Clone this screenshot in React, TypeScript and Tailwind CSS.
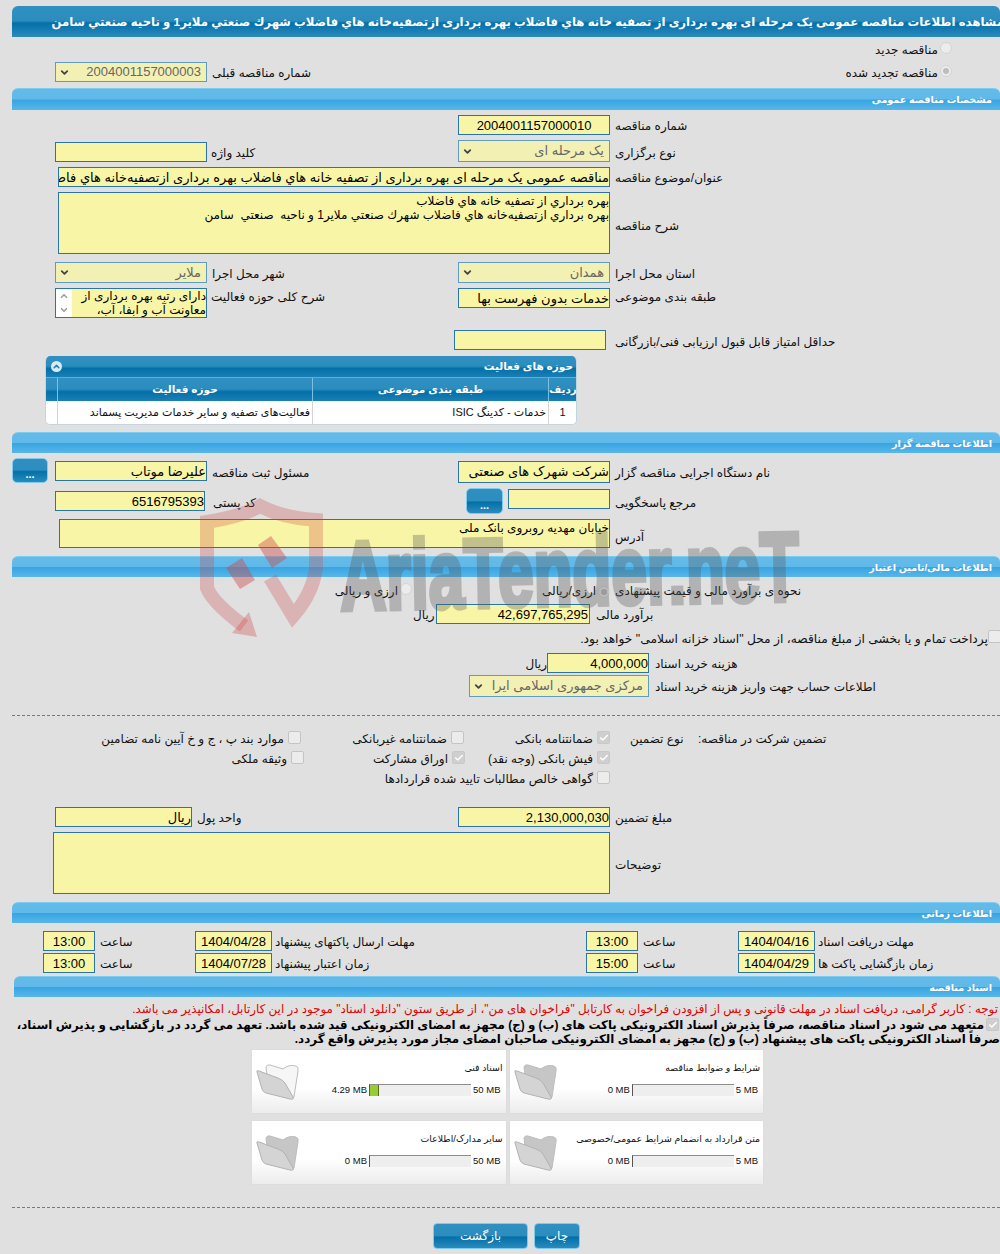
import { Check, ChevronDown, ChevronUp } from 'lucide-react'

const yellow = 'bg-[#f8f6a6] border border-[#2a75a8] text-black'

function Bar({ title, className }: { title: string; className: string }) {
  return (
    <div className={`h-[22px] rounded-t-[6px] border-t border-[#7fcbf0] bg-[linear-gradient(#63bbe9_0%,#61b9e9_48%,#38a5e2_52%,#58b6e8_100%)] text-white font-bold text-[9.6px] leading-[22px] pr-[8px] text-right ${className}`} dir="rtl">
      {title}
    </div>
  )
}

function Label({ children, className = '' }: { children: any; className?: string }) {
  return <div dir="rtl" className={`whitespace-nowrap text-left text-[12px] leading-[16px] text-[#111] ${className}`}>{children}</div>
}

function Box({ value, className, num, center }: { value?: string; className: string; num?: boolean; center?: boolean }) {
  return (
    <div dir={num ? 'ltr' : 'rtl'} className={`${yellow} overflow-hidden whitespace-nowrap text-[13px] leading-[20px] shrink-0 ${center ? 'text-center' : 'text-right'} ${className}`}>
      {value}
    </div>
  )
}

function Select({ value, className }: { value: string; className: string }) {
  return (
    <div className={`flex items-center justify-between bg-[#f3f0b4] border border-[#5f9cc0] text-[#666] text-[13px] pl-[3px] pr-[5px] shrink-0 overflow-hidden whitespace-nowrap ${className}`}>
      <ChevronDown size={11} strokeWidth={4} className="text-[#444] shrink-0" />
      <span dir="rtl">{value}</span>
    </div>
  )
}

function Radio({ on }: { on?: boolean }) {
  return (
    <span className="inline-flex w-[12px] h-[12px] shrink-0 rounded-full border border-[#d4d4d4] bg-[#ececec] items-center justify-center">
      {on && <span className="w-[6px] h-[6px] rounded-full bg-[#bdbdbd]" />}
    </span>
  )
}

function Cb({ on }: { on?: boolean }) {
  return (
    <span className={`inline-flex w-[13px] h-[13px] shrink-0 rounded-[2px] border items-center justify-center ${on ? 'bg-[#cfcfcf] border-[#c8c8c8]' : 'bg-[#ececec] border-[#c4c4c4]'}`}>
      {on && <Check size={10} strokeWidth={3.5} className="text-white" />}
    </span>
  )
}

function Opt({ text, on, className }: { text: string; on?: boolean; className: string }) {
  return (
    <div className={`flex justify-end items-start gap-[4px] shrink-0 ${className}`}>
      <Label>{text}</Label>
      <Cb on={on} />
    </div>
  )
}

function Dots({ className }: { className: string }) {
  return (
    <div className={`rounded-[5px] border border-[#7fcbf0] bg-[linear-gradient(#2e8fc0_0%,#2c8dbf_48%,#0470a8_55%,#2a8cbe_100%)] text-white text-[11px] font-bold flex items-end justify-center pb-[2px] shrink-0 leading-none ${className}`}>...</div>
  )
}

function Folder({ paper }: { paper?: boolean }) {
  return (
    <svg width="44" height="38" viewBox="0 0 44 38" className="shrink-0">
      <path d="M10 3 Q11 0 14 1 L27 5 Q33 0 40 2 Q43 3 42 7 L38 33 Q37 36 34 34 L12 20 Z" fill={paper ? '#f6f6f6' : '#c6c6c6'} stroke="#bdbdbd" />
      <path d="M1 8 Q0 6 3 7 L22 14 Q27 16 29 19 L37 33 Q38 36 34 35 L10 29 Q7 28 6 25 Z" fill="#d4d4d4" stroke="#b2b2b2" />
    </svg>
  )
}

function DocCard({ title, max, used, fill, paper }: { title: string; max: string; used: string; fill?: boolean; paper?: boolean }) {
  return (
    <div className="h-[63px] flex bg-[linear-gradient(#ffffff_0%,#ffffff_60%,#ececec_100%)] shadow-[0_0_1px_#cfcfcf]">
      <div className="pl-[4px] pt-[14px]"><Folder paper={paper} /></div>
      <div className="flex-1 min-w-0 pr-[5px]">
        <div dir="rtl" className="text-[9.4px] leading-[14px] mt-[11px] -mr-[2px] whitespace-nowrap text-[#111]">{title}</div>
        <div className="flex items-center justify-end mt-[9px] h-[12px] text-[9.5px] text-[#111]">
          <span className="mr-[2px] whitespace-nowrap">{used}</span>
          <div className="w-[102px] h-[12px] shrink-0 bg-[#eeeeee] border-t border-[#8d8d8d] border-l border-l-[#555] flex">
            {fill && <div className="w-[9px] bg-[#99cc33] border-r border-[#556b1f]" />}
          </div>
          <span className="whitespace-nowrap ml-[2px]">{max}</span>
        </div>
      </div>
    </div>
  )
}

function HeadCell({ children, className = '' }: { children?: any; className?: string }) {
  return <div dir="rtl" className={`text-center text-white font-bold text-[10.5px] leading-[23px] border-l border-[#7cc0e6] ${className}`}>{children}</div>
}

function Watermark() {
  return (
    <div className="absolute left-[198px] top-[498px] w-[620px] h-[150px] pointer-events-none">
      <svg width="135" height="145" viewBox="0 0 135 145" className="absolute left-0 top-0">
        <path d="M46 128 Q15 105 9 90 L9 24 Q45 18 62 8 Q85 20 118 22 L118 70 Q115 95 95 118 L72 80" fill="none" stroke="#c44" strokeOpacity="0.28" strokeWidth="14" />
        <path d="M51 114 L59 139 L34 135 Z" fill="#c44" fillOpacity="0.32" />
        <path d="M28 70 L44 60 L57 82 L42 91 Z M60 47 L73 38 L89 60 L74 70 Z" fill="#c44" fillOpacity="0.42" />
      </svg>
      <div className="absolute left-[142px] top-[28px] origin-left whitespace-nowrap font-['Liberation_Sans'] font-bold text-[98px] leading-[100px] text-[#555] [-webkit-text-stroke:5px_#555] opacity-[0.32] -rotate-[1.2deg] scale-x-[0.65]">AriaTender.neT</div>
    </div>
  )
}

export default function App() {
  return (
    <div className="relative w-[1000px] h-[1254px] overflow-hidden bg-[#e0e0e0] pt-[6px] font-['Liberation_Sans','DejaVu_Sans',sans-serif] text-[12px] text-[#111]">
      {/* title */}
      <div dir="rtl" className="ml-[12px] h-[31px] rounded-t-[6px] overflow-hidden whitespace-nowrap bg-[linear-gradient(#2f90c1_0%,#2b8cbe_48%,#046fa8_55%,#2a8bbd_100%)] text-white font-bold text-[11.7px] leading-[31px] pr-0">
        <span className="-mr-[4px] inline-block">مشاهده اطلاعات مناقصه عمومی یک مرحله ای بهره برداری از تصفیه خانه هاي فاضلاب بهره برداری ازتصفیه‌خانه هاي فاضلاب شهرك صنعتي ملاير1 و ناحيه صنعتي سامن</span>
      </div>

      <div className="flex justify-end pr-[48px] mt-[5px] h-[14px] gap-[2px]">
        <Label>مناقصه جدید</Label>
        <Radio />
      </div>
      <div className="flex mt-[6px] h-[20px] pl-[55px] pr-[48px]">
        <Select value="2004001157000003" className="w-[152px] h-[20px]" />
        <Label className="ml-[5px] mt-[3px]">شماره مناقصه قبلی</Label>
        <div className="ml-auto flex gap-[2px] mt-[3px]">
          <Label>مناقصه تجدید شده</Label>
          <Radio on />
        </div>
      </div>

      <Bar title="مشخصات مناقصه عمومی" className="ml-[12px] mt-[6px]" />

      <div className="flex mt-[5px] h-[20px]">
        <Box num center value="2004001157000010" className="ml-[458px] w-[152px] h-[20px]" />
        <Label className="ml-[5px] mt-[3px]">شماره مناقصه</Label>
      </div>
      <div className="flex mt-[5px] h-[22px]">
        <Box className="ml-[55px] w-[152px] h-[20px] mt-[2px]" />
        <Label className="ml-[4px] mt-[5px] w-[247px]">کلید واژه</Label>
        <Select value="یک مرحله ای" className="w-[152px] h-[22px]" />
        <Label className="ml-[5px] mt-[5px]">نوع برگزاری</Label>
      </div>
      <div className="flex mt-[5px] h-[20px]">
        <Box value="مناقصه عمومی یک مرحله ای بهره برداری از تصفیه خانه هاي فاضلاب بهره برداری ازتصفیه‌خانه هاي فاضلاب شهرك صنعتي ملاير1" className="ml-[58px] w-[552px] h-[20px]" />
        <Label className="ml-[5px] mt-[3px]">عنوان/موضوع مناقصه</Label>
      </div>
      <div className="flex mt-[5px] h-[62px]">
        <div dir="rtl" className={`${yellow} ml-[58px] w-[552px] h-[62px] text-[12px] leading-[14px] pt-[1px] whitespace-pre`}>
          {'بهره برداري از تصفیه خانه هاي فاضلاب\nبهره برداري ازتصفیه‌خانه هاي فاضلاب شهرك صنعتي ملاير1 و ناحيه  صنعتي  سامن'}
        </div>
        <Label className="ml-[5px] mt-[26px]">شرح مناقصه</Label>
      </div>

      <div className="flex mt-[8px] h-[21px]">
        <Select value="ملایر" className="ml-[55px] w-[152px] h-[21px]" />
        <Label className="ml-[5px] mt-[4px] w-[246px]">شهر محل اجرا</Label>
        <Select value="همدان" className="w-[152px] h-[21px]" />
        <Label className="ml-[5px] mt-[4px]">استان محل اجرا</Label>
      </div>
      <div className="flex mt-[5px] h-[30px]">
        <div className={`${yellow} ml-[55px] w-[152px] h-[30px] flex overflow-hidden`}>
          <div className="w-[16px] bg-white flex flex-col justify-between items-center py-[2px] text-[#a0a0a0] shrink-0">
            <ChevronUp size={10} strokeWidth={4} />
            <ChevronDown size={10} strokeWidth={4} />
          </div>
          <div dir="rtl" className="flex-1 text-[12px] leading-[14px] whitespace-nowrap">
            دارای رتبه بهره برداری از
            <br />
            معاونت آب و ابفا، آب،
          </div>
        </div>
        <Label className="ml-[4px] mt-[1px] w-[247px]">شرح کلی حوزه فعالیت</Label>
        <Box value="خدمات بدون فهرست بها" className="w-[152px] h-[20px]" />
        <Label className="ml-[5px] mt-[1px]">طبقه بندی موضوعی</Label>
      </div>
      <div className="flex mt-[12px] h-[20px]">
        <Box className="ml-[454px] w-[152px] h-[20px]" />
        <Label className="ml-[9px] mt-[4px]">حداقل امتیاز قابل قبول ارزیابی فنی/بازرگانی</Label>
      </div>

      {/* activity table */}
      <div className="ml-[45px] mt-[6px] w-[532px] h-[69px] rounded-[5px] overflow-hidden bg-white border border-[#c5d5e0] border-t-0">
        <div className="h-[22px] flex items-center justify-between pl-[5px] pr-[3px] bg-[linear-gradient(#2f90c1_0%,#2b8cbe_48%,#046fa8_60%,#1a80b5_100%)] border-b border-[#58aede]">
          <span className="w-[11px] h-[11px] rounded-full bg-[#dbe9f3] flex items-center justify-center">
            <ChevronUp size={9} strokeWidth={4} className="text-[#2a7fb2]" />
          </span>
          <span dir="rtl" className="text-white font-bold text-[10.5px]">حوزه های فعالیت</span>
        </div>
        <div className="grid grid-cols-[11px_255px_236px_1fr] h-[23px] bg-[linear-gradient(#2f90c1_0%,#2b8cbe_48%,#046fa8_60%,#1a80b5_100%)]">
          <HeadCell className="border-l-0" />
          <HeadCell>حوزه فعالیت</HeadCell>
          <HeadCell>طبقه بندی موضوعی</HeadCell>
          <HeadCell>ردیف</HeadCell>
        </div>
        <div className="grid grid-cols-[11px_255px_236px_1fr] h-[24px] leading-[23px] text-[11px] text-[#111]">
          <div />
          <div dir="rtl" className="border-l border-[#d5d5d5] pr-[2px] whitespace-nowrap">فعالیت‌های تصفیه و سایر خدمات مدیریت پسماند</div>
          <div dir="rtl" className="border-l border-[#d5d5d5] pr-[2px] whitespace-nowrap">خدمات - کدینگ ISIC</div>
          <div className="border-l border-[#d5d5d5] text-center">1</div>
        </div>
      </div>

      <Bar title="اطلاعات مناقصه گزار" className="ml-[12px] mt-[7px] !h-[21px] !leading-[21px]" />

      <div className="flex mt-[5px] h-[25px] pl-[12px]">
        <Dots className="w-[36px] h-[25px]" />
        <Box value="علیرضا موتاب" className="ml-[7px] w-[152px] h-[20px] mt-[3px]" />
        <Label className="ml-[5px] mt-[7px] w-[246px]">مسئول ثبت مناقصه</Label>
        <Box value="شرکت شهرک های صنعتی" className="w-[152px] h-[22px] mt-[3px]" />
        <Label className="ml-[5px] mt-[7px]">نام دستگاه اجرایی مناقصه گزار</Label>
      </div>
      <div className="flex mt-[5px] h-[26px]">
        <Box num value="6516795393" className="ml-[55px] w-[150px] h-[20px] mt-[3px]" />
        <Label className="ml-[8px] mt-[7px] w-[253px]">کد پستی</Label>
        <Dots className="w-[37px] h-[26px]" />
        <Box className="ml-[5px] w-[102px] h-[20px] mt-[1px]" />
        <Label className="ml-[5px] mt-[7px]">مرجع پاسخگویی</Label>
      </div>
      <div className="flex mt-[5px] h-[29px]">
        <Box value="خیابان مهدیه روبروی بانک ملی" className="ml-[59px] w-[551px] h-[29px] !text-[12px] !leading-[16px]" />
        <Label className="ml-[5px] mt-[10px]">آدرس</Label>
      </div>

      <Bar title="اطلاعات مالی/تامین اعتبار" className="ml-[12px] mt-[8px] !h-[21px] !leading-[21px]" />

      <div className="flex mt-[5px] h-[18px] items-center">
        <Label className="ml-[336px] w-[62px]">ارزی و ریالی</Label>
        <span className="ml-[2px]"><Radio /></span>
        <Label className="ml-[130px] w-[55px]">ارزی/ریالی</Label>
        <span className="ml-[1px]"><Radio on /></span>
        <Label className="ml-[5px]">نحوه ی برآورد مالی و قیمت پیشنهادی</Label>
      </div>
      <div className="flex mt-[4px] h-[20px]">
        <Label className="ml-[413px] w-[23px] mt-[3px]">ریال</Label>
        <Box num value="42,697,765,295" className="w-[154px] h-[20px] pr-[1px]" />
        <Label className="ml-[6px] mt-[3px]">برآورد مالی</Label>
      </div>
      <div className="flex justify-end mt-[6px] h-[18px]">
        <Label className="!text-[12.27px] mt-[1px]">پرداخت تمام و یا بخشی از مبلغ مناقصه، از محل "اسناد خزانه اسلامی" خواهد بود.</Label>
        <span className="-mr-[1px]"><Cb /></span>
      </div>
      <div className="flex mt-[5px] h-[20px]">
        <Label className="ml-[527px] w-[20px] mt-[3px]">ریال</Label>
        <Box num value="4,000,000" className="w-[102px] h-[20px]" />
        <Label className="ml-[6px] mt-[3px]">هزینه خرید اسناد</Label>
      </div>
      <div className="flex mt-[2px] h-[22px]">
        <Select value="مرکزی جمهوری اسلامی ایرا" className="ml-[469px] w-[180px] h-[22px]" />
        <Label className="ml-[6px] mt-[4px]">اطلاعات حساب جهت واریز هزینه خرید اسناد</Label>
      </div>

      <div className="mt-[18px] ml-[12px] border-t border-dashed border-[#4a86ab]" />

      <div className="flex mt-[15px] h-[15px]">
        <Opt text="موارد بند پ ، ج و خ آیین نامه تضامین" className="w-[301px]" />
        <Opt text="ضمانتنامه غیربانکی" className="w-[163px]" />
        <Opt text="ضمانتنامه بانکی" on className="w-[146px]" />
        <Label className="ml-[20px] w-[68px]">نوع تضمین</Label>
        <Label>تضمین شرکت در مناقصه:</Label>
      </div>
      <div className="flex mt-[5px] h-[15px]">
        <Opt text="وثیقه ملکی" className="w-[304px]" />
        <Opt text="اوراق مشارکت" on className="w-[161px]" />
        <Opt text="فیش بانکی (وجه نقد)" on className="w-[145px]" />
      </div>
      <div className="flex mt-[5px] h-[15px]">
        <Opt text="گواهی خالص مطالبات تایید شده قراردادها" className="w-[610px]" />
      </div>

      <div className="flex mt-[21px] h-[20px]">
        <Box value="ریال" className="ml-[55px] w-[137px] h-[20px]" />
        <Label className="ml-[5px] mt-[3px] w-[261px]">واحد پول</Label>
        <Box num value="2,130,000,030" className="w-[152px] h-[20px]" />
        <Label className="ml-[5px] mt-[3px]">مبلغ تضمین</Label>
      </div>
      <div className="flex mt-[5px] h-[62px]">
        <Box className="ml-[53px] w-[557px] h-[62px]" />
        <Label className="ml-[5px] mt-[25px]">توضیحات</Label>
      </div>

      <Bar title="اطلاعات زمانی" className="ml-[12px] mt-[8px] !h-[21px] !leading-[21px]" />

      <div className="flex mt-[8px] h-[20px]">
        <Box num center value="13:00" className="ml-[43px] w-[52px] h-[20px]" />
        <Label className="ml-[5px] mt-[3px] w-[95px]">ساعت</Label>
        <Box num center value="1404/04/28" className="w-[77px] h-[20px]" />
        <Label className="ml-[3px] mt-[3px] w-[311px]">مهلت ارسال پاکتهای پیشنهاد</Label>
        <Box num center value="13:00" className="w-[52px] h-[20px]" />
        <Label className="ml-[5px] mt-[3px] w-[95px]">ساعت</Label>
        <Box num center value="1404/04/16" className="w-[77px] h-[20px]" />
        <Label className="ml-[3px] mt-[3px]">مهلت دریافت اسناد</Label>
      </div>
      <div className="flex mt-[2px] h-[20px]">
        <Box num center value="13:00" className="ml-[43px] w-[52px] h-[20px]" />
        <Label className="ml-[5px] mt-[3px] w-[95px]">ساعت</Label>
        <Box num center value="1404/07/28" className="w-[77px] h-[20px]" />
        <Label className="ml-[3px] mt-[3px] w-[311px]">زمان اعتبار پیشنهاد</Label>
        <Box num center value="15:00" className="w-[52px] h-[20px]" />
        <Label className="ml-[5px] mt-[3px] w-[95px]">ساعت</Label>
        <Box num center value="1404/04/29" className="w-[77px] h-[20px]" />
        <Label className="ml-[3px] mt-[3px]">زمان بازگشایی پاکت ها</Label>
      </div>

      <Bar title="اسناد مناقصه" className="ml-[14px] mt-[3px] !h-[21px] !leading-[21px]" />

      <div dir="rtl" className="mt-[5px] h-[14px] leading-[14px] text-[11.85px] text-[#e00000] whitespace-nowrap pr-[2px]">
        توجه : کاربر گرامی، دریافت اسناد در مهلت قانونی و پس از افزودن فراخوان به کارتابل "فراخوان های من"، از طریق ستون "دانلود اسناد" موجود در این کارتابل، امکانپذیر می باشد.
      </div>
      <div dir="rtl" className="mt-[2px] h-[28px] leading-[14px] text-[11.85px] font-bold text-black">
        <div className="flex gap-[2px] whitespace-nowrap pr-[1px]">
          <Cb on />
          <span>متعهد می شود در اسناد مناقصه، صرفاً پذیرش اسناد الکترونیکی پاکت های (ب) و (ج) مجهز به امضای الکترونیکی قید شده باشد. تعهد می گردد در بازگشایی و پذیرش اسناد،</span>
        </div>
        <div className="whitespace-nowrap">صرفاً اسناد الکترونیکی پاکت های پیشنهاد (ب) و (ج) مجهز به امضای الکترونیکی صاحبان امضای مجاز مورد پذیرش واقع گردد.</div>
      </div>

      <div className="ml-[252px] mt-[4px] w-[511px] grid grid-cols-2 gap-x-[4px] gap-y-[8px]">
        <DocCard title="اسناد فنی" max="50 MB" used="4.29 MB" fill paper />
        <DocCard title="شرایط و ضوابط مناقصه" max="5 MB" used="0 MB" />
        <DocCard title="سایر مدارک/اطلاعات" max="50 MB" used="0 MB" />
        <DocCard title="متن قرارداد به انضمام شرایط عمومی/خصوصی" max="5 MB" used="0 MB" />
      </div>

      <div className="mt-[23px] border-t border-dashed border-[#4a86ab] ml-[12px]" />

      <div className="flex mt-[15px] ml-[433px] gap-[6px]">
        <button className="w-[95px] h-[26px] rounded-[4px] border border-[#7fcbf0] bg-[linear-gradient(#2f90c1_0%,#2b8cbe_48%,#046fa8_55%,#2a8bbd_100%)] text-white text-[12px]">بازگشت</button>
        <button className="w-[46px] h-[26px] rounded-[4px] border border-[#7fcbf0] bg-[linear-gradient(#2f90c1_0%,#2b8cbe_48%,#046fa8_55%,#2a8bbd_100%)] text-white text-[12px]">چاپ</button>
      </div>

      <Watermark />
    </div>
  )
}
